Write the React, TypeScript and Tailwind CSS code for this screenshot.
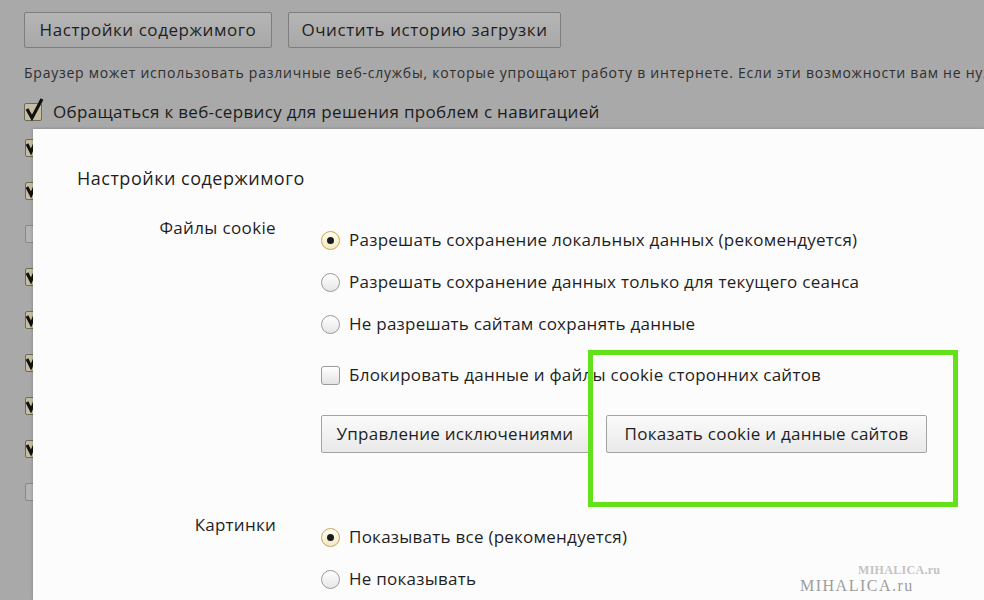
import React from "react";

const font = { fontFamily: '"Open Sans", "Noto Sans", "DejaVu Sans", sans-serif' };

function Radio({ checked }: { checked?: boolean }) {
  return checked ? (
    <span className="w-[19px] h-[19px] rounded-full border border-[#c9a550] bg-gradient-to-b from-[#fffdf2] to-[#f3e9c6] flex items-center justify-center shrink-0">
      <span className="w-[7px] h-[7px] rounded-full bg-[#1a1a1a]" />
    </span>
  ) : (
    <span className="w-[19px] h-[19px] rounded-full border border-[#9a9a9a] bg-gradient-to-b from-[#ffffff] to-[#e6e6e6] shrink-0" />
  );
}

function Box() {
  return <span className="w-[19px] h-[19px] rounded-[3px] border border-[#9a9a9a] bg-gradient-to-b from-[#ffffff] to-[#e3e3e3] shrink-0" />;
}

function BgCheck({ checked }: { checked: boolean }) {
  return (
    <div className="h-[43px] flex items-start">
      {checked ? (
        <span className="relative w-[18px] h-[18px] border border-[#6b6b5a] bg-[#c6bea0] rounded-[2px]">
          <svg className="absolute -left-[1px] -top-[2px]" width="14" height="18" viewBox="0 0 14 18">
            <path d="M2 6 L6 14 L13 -2" stroke="#111" strokeWidth="3" fill="none" />
          </svg>
        </span>
      ) : (
        <span className="w-[18px] h-[18px] border border-[#888] bg-[#b4b4b4] rounded-[2px]" />
      )}
    </div>
  );
}

export default function App() {
  const bgChecks = [true, true, false, true, true, true, true, true, false];
  return (
    <div className="relative w-[984px] h-[600px] overflow-hidden bg-[#a9a9a9]" style={font}>
      {/* Background page */}
      <div className="pl-[24px] pt-[12px]">
        <div className="flex gap-[16px]">
          <div className="w-[248px] h-[36px] border border-[#7e7e7e] rounded-[2px] bg-gradient-to-b from-[#b5b5b5] to-[#a8a8a8] flex items-center justify-center text-[17px] tracking-[0.55px] text-[#1e1e1e]">
            Настройки содержимого
          </div>
          <div className="w-[273px] h-[36px] border border-[#7e7e7e] rounded-[2px] bg-gradient-to-b from-[#b5b5b5] to-[#a8a8a8] flex items-center justify-center text-[17px] tracking-[0.55px] text-[#1e1e1e]">
            Очистить историю загрузки
          </div>
        </div>
        <div className="mt-[16px] h-[18px] text-[14px] tracking-[0.76px] leading-[18px] text-[#2e2e2e] whitespace-nowrap overflow-hidden">
          Браузер может использовать различные веб-службы, которые упрощают работу в интернете. Если эти возможности вам не нужны
        </div>
        <div className="mt-[18px] flex items-center gap-[11px] h-[24px]">
          <span className="relative w-[18px] h-[18px] border border-[#6b6b5a] bg-[#c6bea0] rounded-[2px] shrink-0">
            <svg className="absolute -left-[1px] -top-[6px]" width="20" height="24" viewBox="0 0 20 24">
              <path d="M3 11 L8 20 L18 1" stroke="#111" strokeWidth="3.2" fill="none" />
            </svg>
          </span>
          <span className="text-[17px] tracking-[0.32px] text-[#1c1c1c] whitespace-nowrap">Обращаться к веб-сервису для решения проблем с навигацией</span>
        </div>
        <div className="mt-[15px] pl-[1px] flex flex-col">
          {bgChecks.map((c, i) => (
            <BgCheck key={i} checked={c} />
          ))}
        </div>
      </div>

      {/* Modal overlay */}
      <div className="absolute left-[33px] top-[129px] right-0 bottom-0 bg-[#fdfcfd] shadow-[0_0_3px_rgba(0,0,0,0.25)] text-[#1f1f1f] tracking-[0.25px]">
        <div className="pl-[44px] pt-[37px] text-[18px] tracking-[0.5px] leading-[24px]">Настройки содержимого</div>
        <div className="mt-[26px] grid grid-cols-[243px_1fr] gap-x-[45px]">
          <div className="text-right text-[17px] tracking-[0.35px] leading-[24px]">Файлы cookie</div>
          <div className="pt-[3px] flex flex-col text-[17px]">
            <div className="h-[42px] flex items-center gap-[9px]"><Radio checked /><span>Разрешать сохранение локальных данных (рекомендуется)</span></div>
            <div className="h-[42px] flex items-center gap-[9px]"><Radio /><span>Разрешать сохранение данных только для текущего сеанса</span></div>
            <div className="h-[42px] flex items-center gap-[9px]"><Radio /><span>Не разрешать сайтам сохранять данные</span></div>
            <div className="mt-[9px] h-[42px] flex items-center gap-[9px]"><Box /><span>Блокировать данные и файлы cookie сторонних сайтов</span></div>
            <div className="mt-[19px] flex gap-[17px]">
              <div className="w-[268px] h-[38px] border border-[#a3a3a3] rounded-[2px] bg-gradient-to-b from-[#fbfbfb] to-[#e9e9e9] flex items-center justify-center">Управление исключениями</div>
              <div className="w-[321px] h-[38px] border border-[#a3a3a3] rounded-[2px] bg-gradient-to-b from-[#fbfbfb] to-[#e9e9e9] flex items-center justify-center">Показать cookie и данные сайтов</div>
            </div>
          </div>
          <div className="mt-[60px] text-right text-[17px] leading-[24px]">Картинки</div>
          <div className="mt-[60px] pt-[3px] flex flex-col text-[17px]">
            <div className="h-[42px] flex items-center gap-[9px]"><Radio checked /><span>Показывать все (рекомендуется)</span></div>
            <div className="h-[42px] flex items-center gap-[9px]"><Radio /><span>Не показывать</span></div>
          </div>
        </div>
      </div>

      {/* Green highlight */}
      <div className="absolute left-[588px] top-[350px] w-[370px] h-[157px] border-[5px] border-[#63e21a] pointer-events-none" />

      {/* Watermark */}
      <div className="absolute left-[800px] top-[564px] flex flex-col items-start leading-none pointer-events-none" style={{ fontFamily: '"Liberation Serif", serif' }}>
        <span className="ml-[58px] text-[12px] font-bold text-[#c4c4c4] tracking-[0.3px]">MIHALICA.ru</span>
        <span className="mt-[2px] text-[16px] text-[#9c9c9c] tracking-[1.5px]">MIHALICA.ru</span>
      </div>
    </div>
  );
}
